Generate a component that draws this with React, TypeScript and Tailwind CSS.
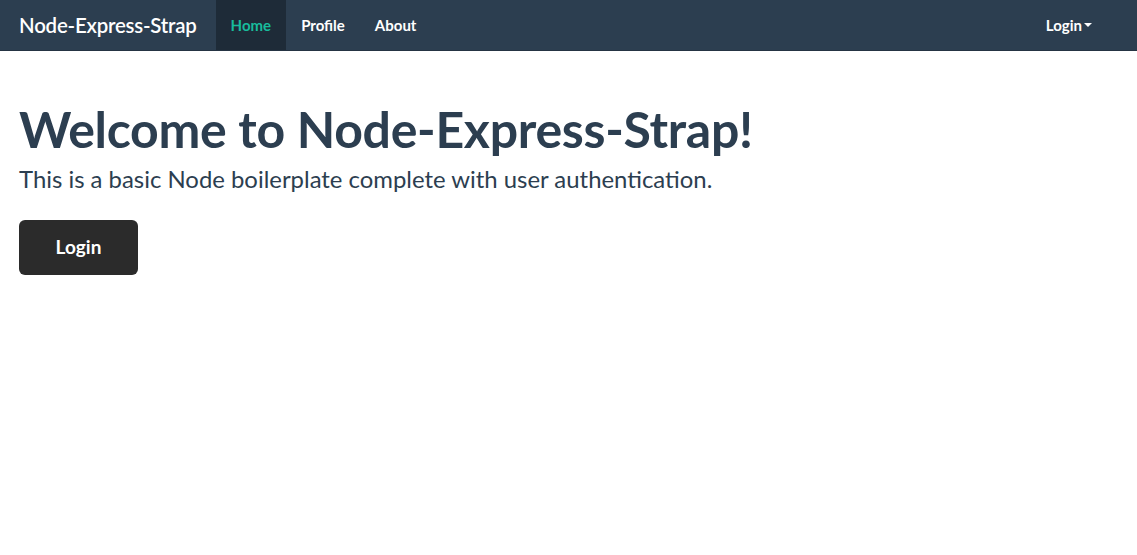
import { useState } from 'react';

const navLinks = [
  { label: 'Home', active: true },
  { label: 'Profile', active: false },
  { label: 'About', active: false },
];

const App = () => {
  const [open, setOpen] = useState(false);

  return (
    <div className="min-h-screen bg-white text-[#2c3e50]" style={{ fontFamily: 'Lato, "Open Sans", sans-serif' }}>
      {/* Navbar */}
      <nav className="h-[51px] bg-[#2c3e50] border-b border-[#253443] flex items-stretch justify-between">
        <div className="flex items-stretch">
          <a href="#" className="flex items-center pl-[19px] pr-[19px] text-white text-[20.4px] font-semibold tracking-[-0.2px]">
            Node-Express-Strap
          </a>
          {navLinks.map((link) => (
            <a
              key={link.label}
              href="#"
              className={
                link.active
                  ? 'flex items-center px-[15px] bg-[#1e2b38] text-[#18bc9c] text-[15px] font-bold'
                  : 'flex items-center px-[15px] text-white text-[15px] font-bold'
              }
            >
              {link.label}
            </a>
          ))}
        </div>
        <button
          onClick={() => setOpen(!open)}
          className="flex items-center pr-[45px] pl-[15px] text-white text-[15px] font-bold"
        >
          Login
          <span className="ml-[2px] inline-block w-0 h-0 border-l-[4px] border-r-[4px] border-t-[4px] border-l-transparent border-r-transparent border-t-white" />
        </button>
      </nav>

      {/* Hero */}
      <section className="px-[19px] pt-[48px]">
        <h1 className="text-[50px] font-bold leading-[60px] tracking-[-0.3px]">Welcome to Node-Express-Strap!</h1>
        <p className="text-[23.9px] leading-[32px] mt-[4px]">This is a basic Node boilerplate complete with user authentication.</p>
        <a
          href="#"
          className="inline-flex items-center justify-center mt-[25px] w-[119px] h-[55px] rounded-[6px] bg-[#2b2b2b] text-white text-[19px] font-bold"
        >
          Login
        </a>
      </section>
    </div>
  );
};

export default App;
